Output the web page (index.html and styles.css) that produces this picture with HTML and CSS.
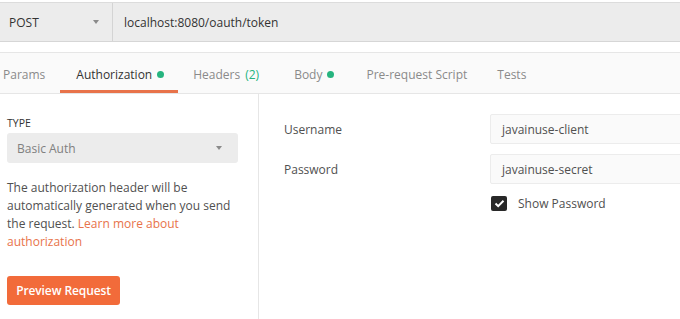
FILE: index.html
```html
<!DOCTYPE html>
<html>
<head>
<meta charset="utf-8">
<link rel="stylesheet" href="styles.css">
</head>
<body>
<div class="urlbar">
  <div class="method"><span>POST</span><span class="caret"></span></div>
  <div class="url">localhost:8080/oauth/token</div>
</div>
<div class="spacer"></div>
<div class="tabs">
  <div class="tab">Params</div>
  <div class="tab active">Authorization<span class="dot"></span></div>
  <div class="tab">Headers <span class="count">(2)</span></div>
  <div class="tab body-tab">Body<span class="dot"></span></div>
  <div class="tab">Pre-request Script</div>
  <div class="tab">Tests</div>
</div>
<div class="content">
  <div class="left">
    <div class="type-label">TYPE</div>
    <div class="select"><span>Basic Auth</span><span class="caret"></span></div>
    <p class="desc">The authorization header will be automatically generated when you send the request. <span class="link">Learn more about authorization</span></p>
    <div class="btn">Preview Request</div>
  </div>
  <div class="right">
    <div class="form">
      <div class="label">Username</div>
      <div class="input">javainuse-client</div>
      <div class="label">Password</div>
      <div class="input">javainuse-secret</div>
      <div></div>
      <div class="check-row">
        <span class="checkbox"><svg width="11" height="9" viewBox="0 0 11 9"><path d="M1.5 4.5 L4.2 7.2 L9.5 1.8" fill="none" stroke="#fff" stroke-width="2"/></svg></span>
        <span>Show Password</span>
      </div>
    </div>
  </div>
</div>
</body>
</html>
```
FILE: styles.css
```css
html, body {
  margin: 0;
  padding: 0;
  background: #fff;
  overflow: hidden;
  width: 680px;
  height: 319px;
}
body {
  font-family: "Open Sans", "Liberation Sans", sans-serif;
  font-size: 12px;
  color: #505050;
}
.urlbar {
  margin-top: 2px;
  height: 38px;
  background: #ececec;
  border-top: 1px solid #dcdcdc;
  border-bottom: 1px solid #d6d6d6;
  display: flex;
  align-items: stretch;
}
.method {
  width: 113px;
  box-sizing: border-box;
  border-right: 1px solid #d4d4d4;
  padding: 0 13px 0 9px;
  display: flex;
  align-items: center;
  justify-content: space-between;
  color: #333;
}
.caret {
  width: 0;
  height: 0;
  border-left: 3.5px solid transparent;
  border-right: 3.5px solid transparent;
  border-top: 4px solid #8a8a8a;
}
.url {
  padding-left: 11px;
  display: flex;
  align-items: center;
  color: #333;
}
.spacer {
  height: 10px;
  background: #fff;
}
.tabs {
  height: 40px;
  background: #fafafa;
  border-top: 1px solid #e6e6e6;
  border-bottom: 1px solid #e6e6e6;
  display: flex;
  margin-left: -12px;
}
.tab {
  padding: 5px 15px 0;
  display: flex;
  align-items: center;
  color: #8a8a8a;
  box-sizing: border-box;
  border-bottom: 3px solid transparent;
  white-space: nowrap;
}
.tab.active {
  color: #333;
  border-bottom-color: #e8734a;
  padding-left: 16px;
  padding-right: 14px;
}
.tab.body-tab {
  padding-left: 20px;
  padding-right: 17px;
}
.dot {
  width: 7px;
  height: 7px;
  border-radius: 50%;
  background: #26b47f;
  margin-left: 5px;
}
.count {
  color: #26b47f;
  margin-left: 5px;
}
.content {
  display: flex;
  height: 226px;
}
.left {
  width: 259px;
  box-sizing: border-box;
  border-right: 1px solid #e6e6e6;
  padding: 22px 20px 0 7px;
}
.type-label {
  font-size: 10.5px;
  color: #333;
  line-height: 14px;
}
.select {
  margin-top: 3px;
  height: 30px;
  width: 231px;
  box-sizing: border-box;
  background: #ececec;
  border-radius: 3px;
  display: flex;
  align-items: center;
  justify-content: space-between;
  padding: 0 16px 0 10px;
  color: #808080;
}
.desc {
  margin: 16px 0 0;
  line-height: 18px;
  color: #505050;
}
.link {
  color: #e8734a;
}
.btn {
  margin-top: 25px;
  display: inline-flex;
  align-items: center;
  justify-content: center;
  width: 113px;
  height: 29px;
  background: #f26b3a;
  color: #fff;
  font-weight: 600;
  letter-spacing: -0.1px;
  border-radius: 3px;
}
.right {
  flex: 1;
  padding: 20px 0 0 25px;
}
.form {
  display: grid;
  grid-template-columns: 206px 200px;
  row-gap: 10px;
  align-items: center;
}
.label {
  color: #505050;
}
.input {
  height: 30px;
  box-sizing: border-box;
  border: 1px solid #ececec;
  background: #fafafa;
  padding-left: 11px;
  display: flex;
  align-items: center;
  color: #505050;
  border-radius: 2px 0 0 2px;
}
.check-row {
  display: flex;
  align-items: center;
  margin-top: 1px;
  padding-left: 1px;
  color: #505050;
}
.checkbox {
  width: 16px;
  height: 15px;
  background: #282828;
  border-radius: 2px;
  display: flex;
  align-items: center;
  justify-content: center;
  margin-right: 11px;
}
```
